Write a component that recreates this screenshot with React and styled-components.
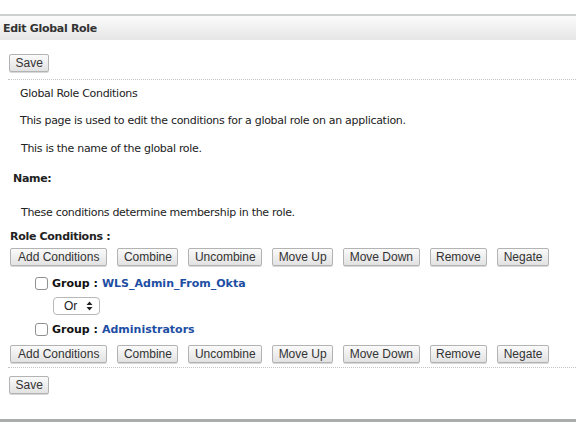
import React from "react";
import styled, { createGlobalStyle } from "styled-components";

const GlobalStyle = createGlobalStyle`
    body {
        margin: 0;
        background: #fff;
        font-family: Tahoma, "DejaVu Sans", Verdana, sans-serif;
        color: #222;
    }
`;

const Page = styled.div`
    padding-top: 14px;
    width: 576px;
`;

const Panel = styled.div`
    border-top: 2px solid #cdd0d0;
    border-bottom: 3px solid #a9acab;
    padding-bottom: 25px;
`;

const Header = styled.div`
    height: 24px;
    display: flex;
    align-items: center;
    padding-left: 3px;
    background: linear-gradient(#fbfbfb, #e5e6e5);
    font-size: 11px;
    font-weight: bold;
    letter-spacing: -0.3px;
    color: #333;
`;

const SaveBar = styled.div`
    padding: ${p => p.top}px 0 0 9px;
`;

const Rule = styled.div`
    margin: ${p => p.top}px 0 0 8px;
    border-top: 1px dotted #c4c4c4;
`;

const Button = styled.button`
    height: 18px;
    padding: 0 ${p => (p.wide ? 7 : 5.5)}px;
    font-family: "Liberation Sans", Arial, sans-serif;
    font-size: 12px;
    color: #333;
    background: linear-gradient(#fafafa, #e2e2e2);
    border: 1px solid #b3b3b3;
    border-radius: 2px;
    box-shadow: 0 1px 0 #d8d8d8;
    line-height: 16px;
`;

const Text = styled.div`
    margin: ${p => p.top}px 0 0 ${p => p.left}px;
    font-size: 11px;
    line-height: 14px;
    letter-spacing: -0.3px;
    font-weight: ${p => (p.bold ? "bold" : "normal")};
    color: #222;
`;

const ButtonRow = styled.div`
    display: flex;
    gap: 10px;
    margin: ${p => p.top}px 0 0 10px;
`;

const ConditionList = styled.div`
    padding-left: 35px;
    margin-top: 10px;
`;

const ConditionRow = styled.div`
    display: flex;
    align-items: center;
    gap: 4px;
    height: 14px;
    font-size: 11px;
    font-weight: bold;
`;

const Box = styled.span`
    width: 11px;
    height: 11px;
    border: 1px solid #909090;
    border-radius: 3px;
    background: #fff;
`;

const GroupLabel = styled.span`
    color: #111;
`;

const GroupName = styled.span`
    color: #1d4ea3;
`;

const Select = styled.div`
    margin: 7px 0 7px 18px;
    width: 47px;
    height: 18px;
    border: 1px solid #b8b8b8;
    border-radius: 4px;
    background: #fff;
    display: flex;
    align-items: center;
    justify-content: space-between;
    padding: 0 6px 0 10px;
    box-sizing: border-box;
    font-family: "Liberation Sans", Arial, sans-serif;
    font-size: 12px;
    color: #222;
`;

const buttons = ["Add Conditions", "Combine", "Uncombine", "Move Up", "Move Down", "Remove", "Negate"];

const Arrows = () => (
    <svg width="7" height="10" viewBox="0 0 7 10">
        <path d="M0.5 4 L3.5 0.5 L6.5 4 Z M0.5 6 L3.5 9.5 L6.5 6 Z" fill="#222" />
    </svg>
);

const Condition = ({ name }) => (
    <ConditionRow>
        <Box />
        <GroupLabel>Group :</GroupLabel>
        <GroupName>{name}</GroupName>
    </ConditionRow>
);

const ConditionButtons = ({ top }) => (
    <ButtonRow top={top}>
        {buttons.map((b, i) => <Button key={b} wide={i === 0}>{b}</Button>)}
    </ButtonRow>
);

const App = () => (
    <Page>
        <GlobalStyle />
        <Panel>
            <Header>Edit Global Role</Header>
            <SaveBar top={12}>
                <Button>Save</Button>
            </SaveBar>
            <Rule top={7} />
            <Text top={7} left={20}>Global Role Conditions</Text>
            <Text top={13} left={20}>This page is used to edit the conditions for a global role on an application.</Text>
            <Text top={14} left={21}>This is the name of the global role.</Text>
            <Text top={16} left={13} bold>Name:</Text>
            <Text top={20} left={21}>These conditions determine membership in the role.</Text>
            <Text top={10} left={10} bold>Role Conditions :</Text>
            <ConditionButtons top={4} />
            <ConditionList>
                <Condition name="WLS_Admin_From_Okta" />
                <Select>Or <Arrows /></Select>
                <Condition name="Administrators" />
            </ConditionList>
            <ConditionButtons top={9} />
            <Rule top={4} />
            <SaveBar top={6}>
                <Button>Save</Button>
            </SaveBar>
        </Panel>
    </Page>
);

export default App;
